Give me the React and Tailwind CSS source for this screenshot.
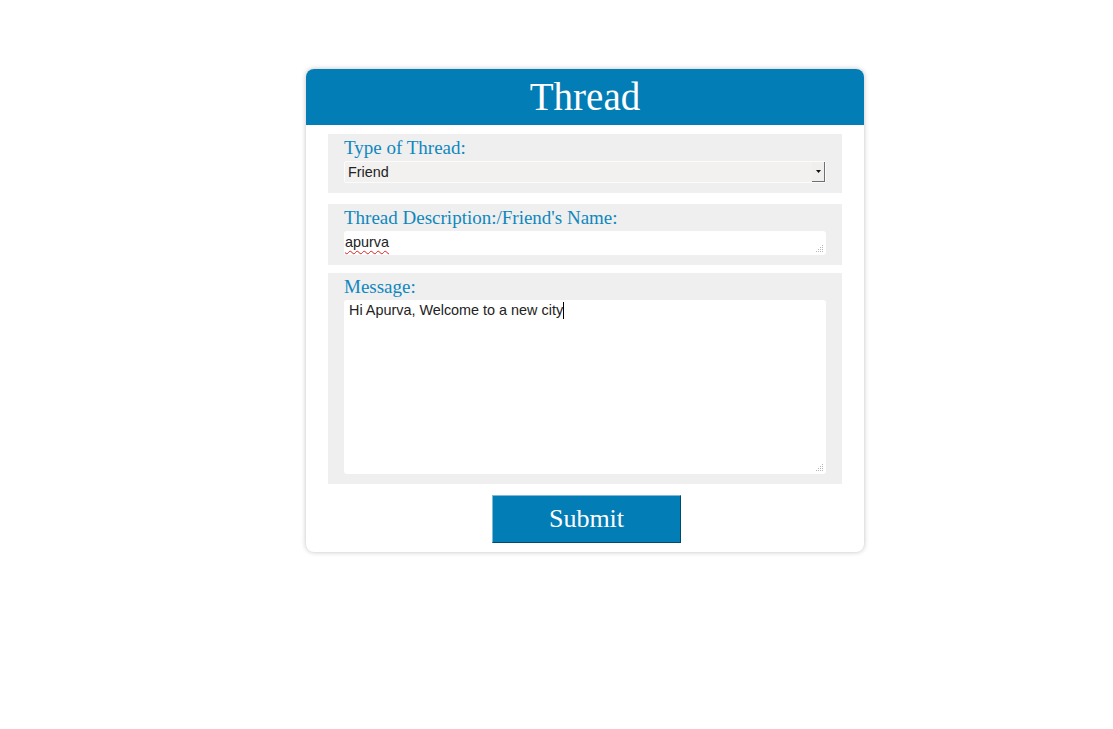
export default function App() {
  const serif = { fontFamily: '"Liberation Serif", "Times New Roman", serif' };
  const sans = { fontFamily: '"Liberation Sans", Arial, sans-serif' };
  const Grip = () => (
    <svg className="absolute right-[2px] bottom-[2px]" width="9" height="9" viewBox="0 0 9 9">
      <g fill="#b5b5b5">
        <rect x="7" y="1" width="1" height="1" />
        <rect x="5" y="3" width="1" height="1" />
        <rect x="7" y="3" width="1" height="1" />
        <rect x="3" y="5" width="1" height="1" />
        <rect x="5" y="5" width="1" height="1" />
        <rect x="7" y="5" width="1" height="1" />
        <rect x="1" y="7" width="1" height="1" />
        <rect x="3" y="7" width="1" height="1" />
        <rect x="5" y="7" width="1" height="1" />
        <rect x="7" y="7" width="1" height="1" />
      </g>
    </svg>
  );
  return (
    <div className="min-h-[729px] w-full bg-white pt-[69px] pl-[306px]">
      <div className="w-[558px] rounded-[8px] bg-white shadow-[0_0_5px_rgba(0,0,0,0.25)] overflow-hidden pb-[9px]">
        <div className="h-[56px] bg-[#037db5] flex items-center justify-center">
          <h1 className="text-white text-[39px] leading-none pb-[1px]" style={serif}>Thread</h1>
        </div>
        <div className="px-[22px] pt-[9px] flex flex-col">
          <div className="bg-[#efefef] h-[59px] px-[16px] pt-[3px]">
            <div className="text-[#0f87bd] text-[19px] leading-[22px] mb-[2px]" style={serif}>Type of Thread:</div>
            <div className="h-[22px] bg-[#f2f1f0] border border-[#fbfbfb] rounded-[2px] flex items-center relative" style={sans}>
              <span className="pl-[3px] pt-[1px] text-[14.4px] text-[#222]">Friend</span>
              <div className="absolute right-0 top-0 h-[20px] w-[13px] border-r border-b border-[#6f6f6f] bg-[#f0efee] flex items-center justify-center">
                <svg width="5" height="3" viewBox="0 0 5 3"><path d="M0 0h5L2.5 3z" fill="#111" /></svg>
              </div>
            </div>
          </div>
          <div className="bg-[#efefef] h-[61px] px-[16px] pt-[3px] mt-[11px]">
            <div className="text-[#0f87bd] text-[19px] leading-[22px] mb-[2px]" style={serif}>Thread Description:/Friend's Name:</div>
            <div className="relative h-[24px] bg-white rounded-[3px]" style={sans}>
              <span className="absolute left-[1px] top-[1px] text-[14.4px] text-[#222] underline decoration-wavy decoration-[#e02020] decoration-[1px] underline-offset-[3px]">apurva</span>
              <Grip />
            </div>
          </div>
          <div className="bg-[#efefef] h-[211px] px-[16px] pt-[3px] mt-[8px]">
            <div className="text-[#0f87bd] text-[19px] leading-[22px] mb-[2px]" style={serif}>Message:</div>
            <div className="relative h-[174px] bg-white rounded-[3px]" style={sans}>
              <span className="absolute left-[5px] top-[1px] text-[14.4px] text-[#222] leading-[18px]">Hi Apurva, Welcome to a new city<span className="inline-block w-[1px] h-[17px] bg-black align-[-4px]"></span></span>
              <Grip />
            </div>
          </div>
          <div className="flex justify-center mt-[11px]">
            <button className="ml-[3px] w-[189px] h-[48px] bg-[#037db5] border-t border-l border-t-[#7fb9d6] border-l-[#7fb9d6] border-r border-b border-r-[#024a6b] border-b-[#024a6b] text-white text-[26px] leading-none" style={serif}>Submit</button>
          </div>
        </div>
      </div>
    </div>
  );
}
